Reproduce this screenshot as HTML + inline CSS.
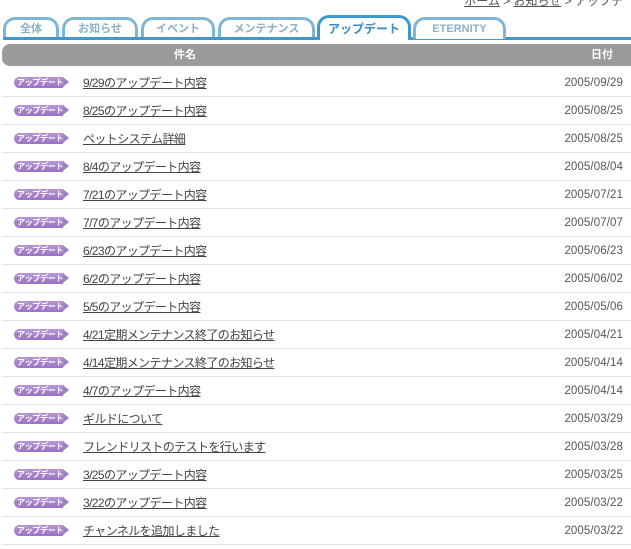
<!DOCTYPE html>
<html><head><meta charset="utf-8"><style>
body{margin:0;width:631px;height:549px;overflow:hidden;background:#fff;font-family:"Liberation Sans","Noto Sans CJK JP",sans-serif;position:relative}
.bc{position:absolute;right:8px;top:-8px;font-size:12px;color:#555}
.bc u{color:#555}
.tab{position:absolute;top:17px;height:22px;border:3px solid #7fb5d6;border-bottom:none;border-radius:12px 12px 0 0;box-sizing:border-box;text-align:center;font-size:11px;font-weight:bold;color:#8ab0c8;line-height:18px;background:#fff}
.tab.a{top:15px;height:25px;border-color:#3d9ad0;color:#3a8cc4;font-size:12px;line-height:22px}
.line{position:absolute;left:3px;right:0;top:37px;height:3px;background:#3d9ad0}
.hd{position:absolute;left:2px;right:0;top:44px;height:22px;background:#9a9a9a;border-radius:8px 0 0 8px;color:#fff;font-size:11px;font-weight:bold;line-height:22px}
.row{position:absolute;left:2px;right:0;height:28px;border-bottom:1px solid #e2e2e2;box-sizing:border-box}
.bd{position:absolute;left:12px;top:8px;width:49px;height:11px;background:linear-gradient(#b896d8,#9a72c4);border-radius:6px 0 0 6px;color:#fff;font-size:8px;line-height:11px;padding-left:3px;box-sizing:border-box;font-weight:bold;white-space:nowrap;letter-spacing:-0.3px;overflow:visible}
.bd:after{content:"";position:absolute;right:-6px;top:0;border-left:6px solid #a27ccb;border-top:5.5px solid transparent;border-bottom:5.5px solid transparent}
.t{position:absolute;left:81px;top:5px;font-size:12px;color:#444;text-decoration:underline;letter-spacing:-0.6px;white-space:nowrap}
.d{position:absolute;right:8px;top:8px;color:#555;font-size:11.5px;letter-spacing:0.1px}
</style></head><body>
<div class="bc"><u>ホーム</u> &gt; <u>お知らせ</u> &gt; アップデ</div>
<div class="tab" style="left:3px;width:56px">全体</div>
<div class="tab" style="left:62px;width:76px">お知らせ</div>
<div class="tab" style="left:141px;width:74px">イベント</div>
<div class="tab" style="left:218px;width:97px">メンテナンス</div>
<div class="line"></div>
<div class="tab a" style="left:317px;width:94px">アップデート</div>
<div class="tab" style="left:413px;width:93px">ETERNITY</div>
<div class="hd"><span style="position:absolute;left:172px">件名</span><span style="position:absolute;right:18px">日付</span></div>
<div id="rows"></div>
<script>
var d=[["9/29のアップデート内容","2005/09/29"],["8/25のアップデート内容","2005/08/25"],["ペットシステム詳細","2005/08/25"],["8/4のアップデート内容","2005/08/04"],["7/21のアップデート内容","2005/07/21"],["7/7のアップデート内容","2005/07/07"],["6/23のアップデート内容","2005/06/23"],["6/2のアップデート内容","2005/06/02"],["5/5のアップデート内容","2005/05/06"],["4/21定期メンテナンス終了のお知らせ","2005/04/21"],["4/14定期メンテナンス終了のお知らせ","2005/04/14"],["4/7のアップデート内容","2005/04/14"],["ギルドについて","2005/03/29"],["フレンドリストのテストを行います","2005/03/28"],["3/25のアップデート内容","2005/03/25"],["3/22のアップデート内容","2005/03/22"],["チャンネルを追加しました","2005/03/22"]];
var h="";d.forEach(function(r,i){h+='<div class="row" style="top:'+(69+i*28)+'px"><div class="bd">アップデート</div><div class="t">'+r[0]+'</div><div class="d">'+r[1]+'</div></div>';});
document.getElementById("rows").innerHTML=h;
</script>
</body></html>
